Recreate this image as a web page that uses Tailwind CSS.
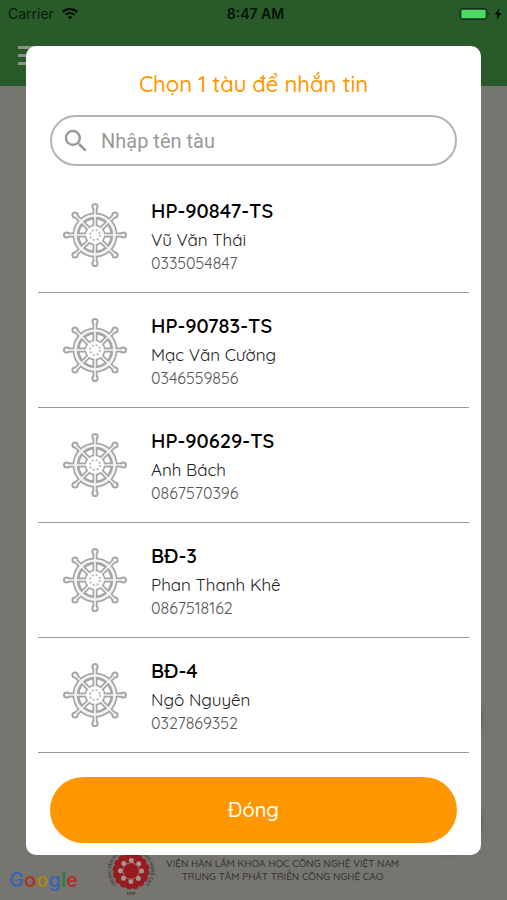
<!DOCTYPE html>
<html lang="vi">

<head>
    <meta charset="UTF-8">
    <meta name="viewport" content="width=device-width, initial-scale=1.0">
    <title>Chọn tàu</title>
    <!-- Tailwind CSS -->
    <script src="https://cdn.jsdelivr.net/npm/@tailwindcss/browser@4"></script>
</head>

<body class="bg-[#777570] font-['Quicksand','Lato','Noto_Sans',sans-serif] text-black">
    <!-- Icon sprite -->
    <svg class="hidden">
        <symbol id="wheel" viewBox="0 0 64 64">
            <g fill="none" stroke="#a6a6a6">
                <circle cx="32" cy="32" r="19" stroke-width="7" />
                <path stroke-width="5" d="M32 4v56M4 32h56M12.2 12.2l39.6 39.6M51.8 12.2L12.2 51.8" />
            </g>
            <g fill="#a6a6a6">
                <circle cx="32" cy="32" r="10.500" />
                <circle cx="32" cy="3.6" r="3.6" />
                <circle cx="32" cy="60.4" r="3.6" />
                <circle cx="3.6" cy="32" r="3.6" />
                <circle cx="60.4" cy="32" r="3.6" />
                <circle cx="12" cy="12" r="3.6" />
                <circle cx="52" cy="12" r="3.6" />
                <circle cx="12" cy="52" r="3.6" />
                <circle cx="52" cy="52" r="3.6" />
            </g>
            <g fill="none" stroke="#f4f4f4">
                <circle cx="32" cy="32" r="19.5" stroke-width="2.600" />
                <path stroke-width="1.600" d="M32 4v56M4 32h56M12.2 12.2l39.6 39.6M51.8 12.2L12.2 51.8" />
            </g>
            <g fill="#fff">
                <circle cx="32" cy="32" r="9" />
                <circle cx="32" cy="3.6" r="1.6" />
                <circle cx="32" cy="60.4" r="1.6" />
                <circle cx="3.6" cy="32" r="1.6" />
                <circle cx="60.4" cy="32" r="1.6" />
                <circle cx="12" cy="12" r="1.6" />
                <circle cx="52" cy="12" r="1.6" />
                <circle cx="12" cy="52" r="1.6" />
                <circle cx="52" cy="52" r="1.6" />
            </g>
            <circle cx="32" cy="32" r="5" fill="none" stroke="#b0b0b0" stroke-width="1.6" stroke-dasharray="2 1.93" />
        </symbol>
    </svg>

    <!-- Map page behind the dialog -->
    <div class="flex min-h-screen flex-col">
        <header class="h-[86px] bg-[#285a2a]">
            <div class="grid grid-cols-3 items-center px-2 pt-1 font-['Inter',sans-serif] text-[14px] leading-5">
                <div class="flex items-center gap-2 text-[#0b1a0c]">
                    <span>Carrier</span>
                    <svg class="h-3 w-4" viewBox="0 0 16 12" fill="#071208">
                        <path d="M8 0C4.9 0 2.100 1.200 0 3.200l1.500 1.600C3.200 3.100 5.500 2.200 8 2.200s4.800.9 6.500 2.600L16 3.200C13.900 1.200 11.100 0 8 0z" />
                        <path d="M8 4C6 4 4.200 4.800 2.800 6l1.500 1.600C5.300 6.700 6.600 6.200 8 6.200s2.700.5 3.700 1.400L13.200 6C11.800 4.800 10 4 8 4z" />
                        <path d="M8 8c-.9 0-1.700.3-2.400.9L8 11.600l2.400-2.700C9.700 8.300 8.900 8 8 8z" />
                    </svg>
                </div>
                <span class="pl-1 text-center font-semibold text-[#071208]">8:47 AM</span>
                <svg class="-mr-1 h-3 w-11 justify-self-end" viewBox="0 0 44 12">
                    <rect x="1" y=".5" width="27" height="11" rx="2.500" fill="#285a2a" stroke="#153217" />
                    <rect x="2.500" y="2" width="24" height="8" rx="1" fill="#4cd964" />
                    <path d="M29.500 4.200c1.200.3 1.200 3.300 0 3.600z" fill="#153217" />
                    <path d="M40.500 0L35.500 6.800h3L37.500 12l5-6.900h-3z" fill="#071208" />
                </svg>
            </div>
            <button type="button" aria-label="Menu" class="mt-5 ml-[18px] flex w-6 flex-col gap-[5px] pt-[2px]">
                <span class="h-[3px] w-full bg-[#8d938a]"></span>
                <span class="h-[3px] w-full bg-[#8d938a]"></span>
                <span class="h-[3px] w-full bg-[#8d938a]"></span>
            </button>
        </header>

        <main class="flex grow flex-col items-end justify-end gap-10 pr-[26px]">
            <button type="button" aria-label="Vị trí" class="size-16 rounded-full bg-[#6f6d69] shadow-md shadow-black/30"></button>
            <button type="button" aria-label="Nhắn tin" class="mb-2 size-16 rounded-full bg-[#6f6d69] shadow-md shadow-black/30"></button>
        </main>

        <footer class="-mt-3 flex items-start pb-1 pl-[9px]">
            <div class="mt-[22px] w-[97px] font-['Inter',sans-serif] text-[20px] leading-6 font-semibold">
                <span class="text-[#3c66ab]">G</span><span class="text-[#a8352c]">o</span><span class="text-[#ad8614]">o</span><span class="text-[#3c66ab]">g</span><span class="text-[#2b7d40]">l</span><span class="text-[#a8352c]">e</span>
            </div>
            <svg class="size-[50px]" viewBox="0 0 50 50">
                <path id="ring" d="M14.700 42.100A20 20 0 1 1 35.300 42.100" fill="none" />
                <path id="ring-bottom" d="M8 42.200A24.100 24.100 0 0 0 42 42.200" fill="none" />
                <g fill="#971c20">
                    <circle cx="25" cy="25" r="17.500" />
                    <circle cx="25" cy="25" r="17.500" fill="none" stroke="#971c20" stroke-width="2" stroke-dasharray="4 2.870" />
                </g>
                <circle cx="25" cy="25" r="10.500" fill="none" stroke="#a39590" stroke-width="5" stroke-linecap="round" stroke-dasharray="0 8.247" />
                <circle cx="25" cy="25" r="8.200" fill="none" stroke="#9c7a76" stroke-width="1" />
                <circle cx="25" cy="25" r="7.500" fill="#971c20" />
                <g fill="#3b3a38" font-family="Lato, sans-serif" font-size="4.500" font-weight="700">
                    <text text-anchor="middle"><textPath href="#ring" startOffset="50%">TRUNG TÂM PHÁT TRIỂN CÔNG NGHỆ CAO</textPath></text>
                    <text text-anchor="middle"><textPath href="#ring-bottom" startOffset="50%">NTP</textPath></text>
                </g>
            </svg>
            <p class="mt-[11px] ml-[10px] text-center text-[10px] leading-[13px] font-medium whitespace-nowrap text-[#32312f]">
                VIỆN HÀN LÂM KHOA HỌC CÔNG NGHỆ VIỆT NAM<br>
                TRUNG TÂM PHÁT TRIỂN CÔNG NGHỆ CAO
            </p>
        </footer>
    </div>

    <!-- Ship picker dialog -->
    <div class="absolute inset-x-0 top-0 px-[26px] pt-[46px]">
        <div role="dialog" aria-labelledby="dialog-title" class="rounded-[10px] bg-white px-3 pt-[22px] pb-3">
            <h1 id="dialog-title" class="text-center text-[22px] leading-8 font-medium text-[#ff9800]">Chọn 1 tàu để nhắn tin</h1>

            <label for="shipSearch" class="mx-3 mt-[15px] flex h-[51px] items-center rounded-full border-2 border-[#b4b4b4] px-[9px]">
                <svg class="size-[30px] shrink-0" viewBox="0 0 24 24" fill="#999">
                    <path d="M15.500 14h-.79l-.28-.27A6.471 6.471 0 0 0 16 9.500 6.500 6.500 0 1 0 9.500 16c1.610 0 3.090-.59 4.230-1.570l.27.28v.79l5 4.990L20.490 19l-4.990-5zm-6 0C7.010 14 5 11.990 5 9.500S7.010 5 9.500 5 14 7.010 14 9.500 11.990 14 9.500 14z" />
                </svg>
                <input type="text" id="shipSearch" placeholder="Nhập tên tàu"
                    class="ml-[10px] w-full min-w-0 font-['Roboto',sans-serif] text-[20px] leading-6 placeholder:text-[#999] focus:outline-none">
            </label>

            <ul class="mt-3">
                <li class="flex h-[115px] items-center gap-6 border-b border-[#999] pl-[25px]">
                    <svg class="size-16 shrink-0"><use href="#wheel" /></svg>
                    <div class="pb-[3px]">
                        <h2 class="text-[20px] leading-[30px] font-semibold">HP-90847-TS</h2>
                        <p class="text-[17px] leading-7 text-[#222]">Vũ Văn Thái</p>
                        <p class="text-[16px] leading-[18px] text-[#555]">0335054847</p>
                    </div>
                </li>
                <li class="flex h-[115px] items-center gap-6 border-b border-[#999] pl-[25px]">
                    <svg class="size-16 shrink-0"><use href="#wheel" /></svg>
                    <div class="pb-[3px]">
                        <h2 class="text-[20px] leading-[30px] font-semibold">HP-90783-TS</h2>
                        <p class="text-[17px] leading-7 text-[#222]">Mạc Văn Cường</p>
                        <p class="text-[16px] leading-[18px] text-[#555]">0346559856</p>
                    </div>
                </li>
                <li class="flex h-[115px] items-center gap-6 border-b border-[#999] pl-[25px]">
                    <svg class="size-16 shrink-0"><use href="#wheel" /></svg>
                    <div class="pb-[3px]">
                        <h2 class="text-[20px] leading-[30px] font-semibold">HP-90629-TS</h2>
                        <p class="text-[17px] leading-7 text-[#222]">Anh Bách</p>
                        <p class="text-[16px] leading-[18px] text-[#555]">0867570396</p>
                    </div>
                </li>
                <li class="flex h-[115px] items-center gap-6 border-b border-[#999] pl-[25px]">
                    <svg class="size-16 shrink-0"><use href="#wheel" /></svg>
                    <div class="pb-[3px]">
                        <h2 class="text-[20px] leading-[30px] font-semibold">BĐ-3</h2>
                        <p class="text-[17px] leading-7 text-[#222]">Phan Thanh Khê</p>
                        <p class="text-[16px] leading-[18px] text-[#555]">0867518162</p>
                    </div>
                </li>
                <li class="flex h-[115px] items-center gap-6 border-b border-[#999] pl-[25px]">
                    <svg class="size-16 shrink-0"><use href="#wheel" /></svg>
                    <div class="pb-[3px]">
                        <h2 class="text-[20px] leading-[30px] font-semibold">BĐ-4</h2>
                        <p class="text-[17px] leading-7 text-[#222]">Ngô Nguyên</p>
                        <p class="text-[16px] leading-[18px] text-[#555]">0327869352</p>
                    </div>
                </li>
            </ul>

            <div class="mt-6 px-3">
                <button type="button" class="h-[66px] w-full rounded-full bg-[#ff9800] text-[20px] font-medium text-white">Đóng</button>
            </div>
        </div>
    </div>
</body>

</html>
